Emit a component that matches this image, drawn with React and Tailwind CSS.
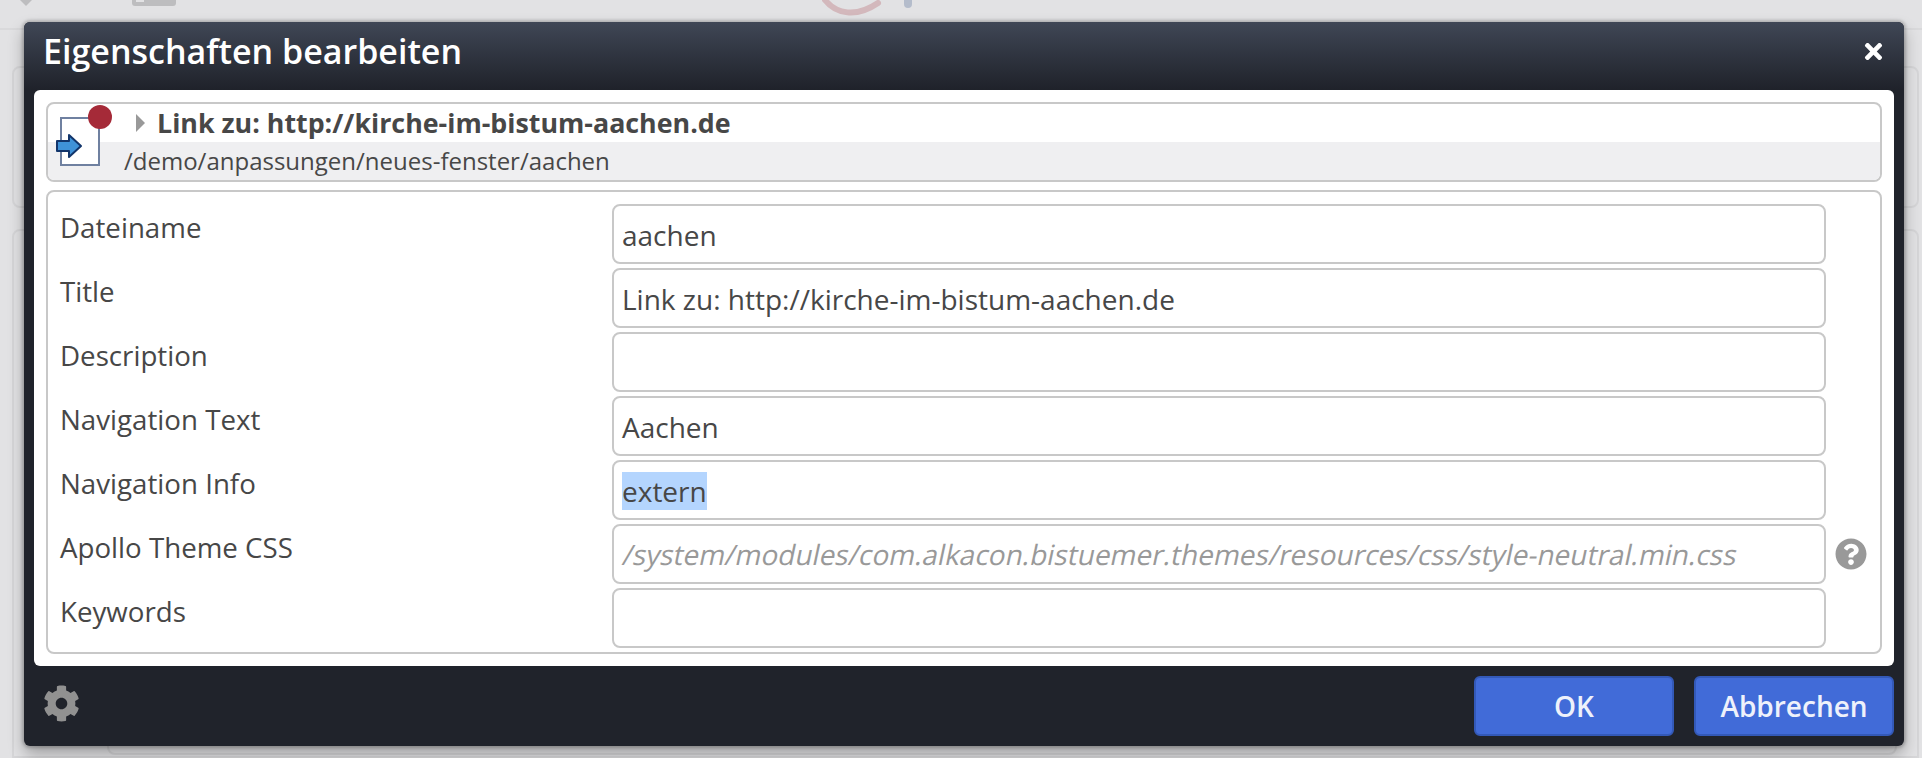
import { FaCog, FaQuestionCircle, FaTimes } from 'react-icons/fa'

const FONT = "font-['Open_Sans',sans-serif]"

const fields = [
  { label: 'Dateiname', value: 'aachen' },
  { label: 'Title', value: 'Link zu: http://kirche-im-bistum-aachen.de' },
  { label: 'Description', value: '' },
  { label: 'Navigation Text', value: 'Aachen' },
  { label: 'Navigation Info', value: 'extern', selected: true },
  { label: 'Apollo Theme CSS', value: '/system/modules/com.alkacon.bistuemer.themes/resources/css/style-neutral.min.css', inherited: true },
  { label: 'Keywords', value: '' },
]

export default function App() {
  return (
    <div className={`relative h-[758px] w-[1922px] overflow-hidden bg-[#e2e2e4] ${FONT}`}>
      <Backdrop />
      <div className="absolute left-[24px] top-[22px] flex h-[724px] w-[1880px] flex-col rounded-[6px] bg-[#20232b] shadow-[0_0_3px_2px_rgba(0,0,0,0.18),0_8px_16px_rgba(0,0,0,0.3)]">
        <div className="flex h-[68px] items-start justify-between rounded-t-[6px] bg-gradient-to-b from-[#404756] to-[#1f222a] pl-[19px] pr-[18px]">
          <h1 className="mt-[7px] text-[34px] font-semibold leading-[44px] text-white">Eigenschaften bearbeiten</h1>
          <FaTimes className="mt-[17px] text-[25px] text-white" />
        </div>
        <div className="mx-[10px] flex h-[576px] flex-col gap-[8px] rounded-[6px] bg-white p-[12px]">
          <ResourceInfo />
          <div className="flex h-[464px] flex-col gap-[4px] rounded-[8px] border-2 border-[#c8c8c8] pl-[12px] pt-[12px]">
            {fields.map(f => <Field key={f.label} {...f} />)}
          </div>
        </div>
        <div className="flex flex-1 items-center justify-between px-[10px]">
          <FaCog className="mb-[6px] ml-[9px] text-[37px] text-[#919191]" />
          <div className="flex gap-[20px]">
            <Button>OK</Button>
            <Button>Abbrechen</Button>
          </div>
        </div>
      </div>
    </div>
  )
}

// greyed out page behind the dialog
function Backdrop() {
  return (
    <div className="flex h-full flex-col">
      <div className="flex h-[30px] shrink-0 border-b-2 border-[#d9d9db] pl-[20px]">
        <svg width="12" height="6" viewBox="0 0 12 6" className="fill-[#bdbdbf]">
          <path d="M0 0 H12 L6 6 Z" />
        </svg>
        <div className="ml-[100px] flex h-[6px] w-[44px] rounded-b-[3px] bg-[#bdbdbf] pl-[4px]">
          <div className="h-[2px] w-[8px] bg-[#e2e2e4]" />
        </div>
        <svg width="100" height="18" viewBox="0 0 100 18" fill="none" className="ml-[646px]">
          <path d="M3 0 C14 14 34 18 56 3" stroke="#d3b8bc" strokeWidth="6" strokeLinecap="round" />
          <path d="M86 0 V4" stroke="#b4bccb" strokeWidth="8" strokeLinecap="round" />
        </svg>
      </div>
      <div className="ml-[12px] mr-[3px] mt-[36px] h-[142px] shrink-0 rounded-[8px] border-2 border-[#d6d6d8]" />
      <div className="ml-[12px] mr-[3px] mt-[21px] flex flex-1 flex-col rounded-t-[8px] border-2 border-[#d6d6d8] pb-[1px] pl-[93px] pr-[20px]">
        <div className="flex-1 rounded-[8px] border-2 border-[#d4d4d6]" />
      </div>
    </div>
  )
}

function ResourceInfo() {
  return (
    <div className="relative h-[80px] shrink-0 overflow-hidden rounded-[8px] border-2 border-[#c8c8c8] text-[#474747]">
      <div className="flex h-[38px] items-center pl-[88px]">
        <svg width="10" height="18" viewBox="0 0 10 18" className="fill-[#999]">
          <path d="M0 0 L9 9 L0 18 Z" />
        </svg>
        <span className="ml-[11px] text-[26.8px] font-bold leading-[36px]">Link zu: http://kirche-im-bistum-aachen.de</span>
      </div>
      <div className="flex h-[38px] items-center bg-[#efeff1] pl-[76px] text-[24px]">/demo/anpassungen/neues-fenster/aachen</div>
      <LinkIcon />
    </div>
  )
}

function LinkIcon() {
  return (
    <svg width="64" height="72" viewBox="0 0 64 72" className="absolute left-[6px] top-0">
      <rect x="7" y="14" width="38" height="47" fill="#fff" stroke="#6f80a0" strokeWidth="2" />
      <circle cx="46" cy="13" r="12" fill="#a52a38" />
      <path d="M3 37 H15 V31 L27 42 L15 53 V47 H3 Z" fill="#3f92d8" stroke="#12356b" strokeWidth="2" strokeLinejoin="round" />
    </svg>
  )
}

function Field({ label, value, selected, inherited }) {
  return (
    <div className="flex h-[60px] items-start">
      <label className="mt-[5px] w-[552px] shrink-0 text-[27.7px] leading-[36px] text-[#474747]">{label}</label>
      <div className="flex h-[60px] w-[1214px] shrink-0 items-center rounded-[8px] border-2 border-[#c8c8c8] px-[8px] text-[28px]">
        {selected ? (
          <span className="mt-[2px] bg-[#b4d5fe] leading-[38px] text-[#474747]">{value}</span>
        ) : inherited ? (
          // the original shows a slanted upright face, not the true italic
          <span className="-ml-[3px] inline-block origin-bottom-left -skew-x-12 text-[#999]">{value}</span>
        ) : (
          <span className="mt-[2px] text-[#474747]">{value}</span>
        )}
      </div>
      {inherited && <FaQuestionCircle className="ml-[9px] mt-[14px] text-[32px] text-[#999]" />}
    </div>
  )
}

function Button({ children }) {
  return (
    <button className="h-[60px] w-[200px] rounded-[6px] border-2 border-[#3359b8] bg-[#416bd8] text-[28px] font-semibold text-[#eef1fb]">
      {children}
    </button>
  )
}
